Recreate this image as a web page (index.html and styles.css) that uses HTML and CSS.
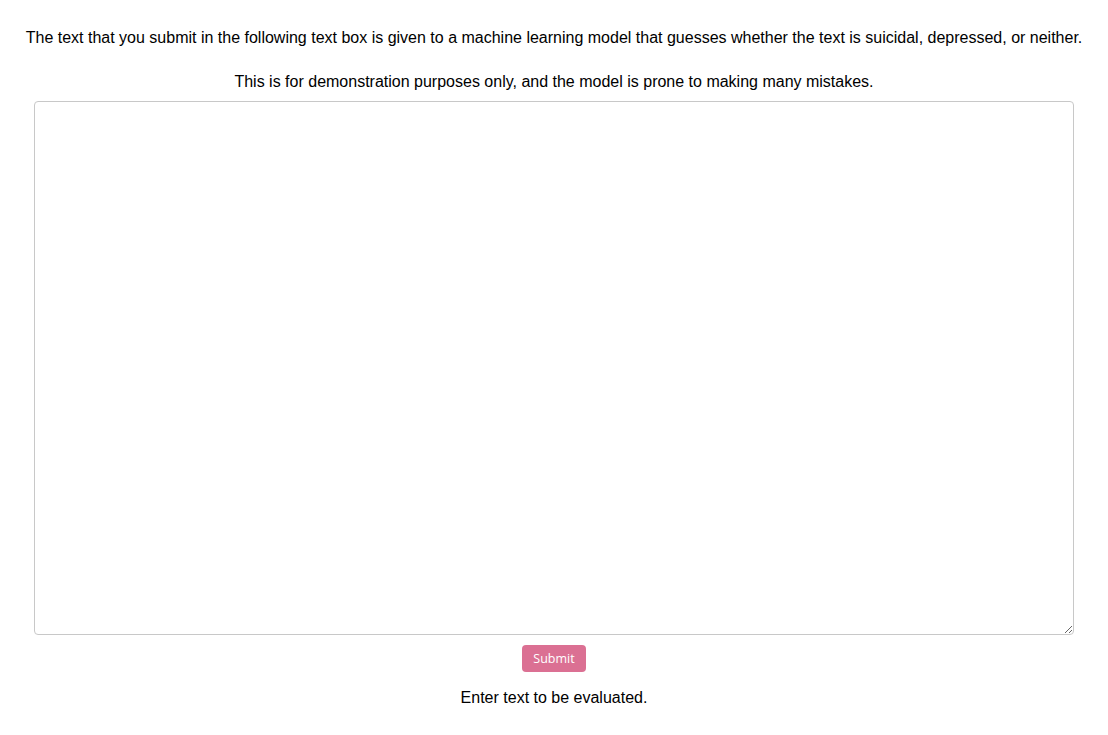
FILE: index.html
```html
<!DOCTYPE html>
<html>
<head>
<meta charset="utf-8">
<link rel="stylesheet" href="styles.css">
</head>
<body>
<main class="page">
  <p class="intro">The text that you submit in the following text box is given to a machine learning model that guesses whether the text is suicidal, depressed, or neither.</p>
  <p class="note">This is for demonstration purposes only, and the model is prone to making many mistakes.</p>
  <textarea class="entry"></textarea>
  <button class="submit">Submit</button>
  <p class="result">Enter text to be evaluated.</p>
</main>
</body>
</html>
```
FILE: styles.css
```css
html, body {
  margin: 0;
  padding: 0;
  background: #ffffff;
}
body {
  font-family: "Liberation Sans", Arial, sans-serif;
  font-size: 16px;
  color: #000;
}
.page {
  display: flex;
  flex-direction: column;
  align-items: center;
  padding-top: 28px;
}
.page p {
  margin: 0;
  line-height: 20px;
  text-align: center;
}
.note {
  margin-top: 24px !important;
}
.entry {
  box-sizing: border-box;
  width: 1040px;
  height: 534px;
  margin-top: 9px;
  border: 1px solid #c8c8c8;
  border-radius: 4px;
  resize: both;
  outline: none;
  font-family: "Liberation Sans", Arial, sans-serif;
  font-size: 16px;
}
.submit {
  margin-top: 10px;
  width: 64px;
  height: 27px;
  padding: 0;
  border: none;
  border-radius: 4px;
  background: #db7093;
  color: #ffffff;
  font-family: "Open Sans", "Noto Sans", sans-serif;
  font-size: 12.5px;
}
.result {
  margin-top: 16px !important;
}
```
